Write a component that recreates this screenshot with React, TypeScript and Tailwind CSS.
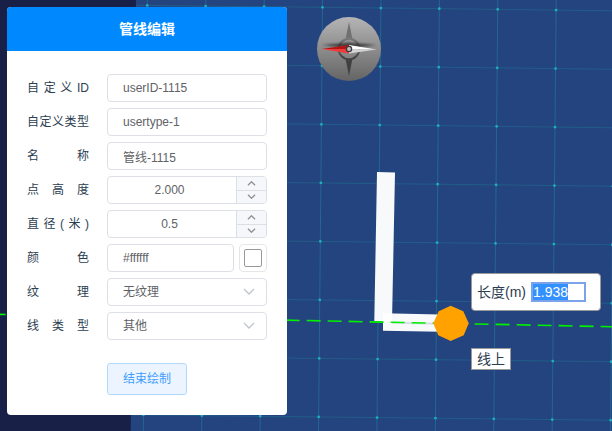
import { useEffect, useRef, useState } from "react"
import type { ReactNode } from "react"

const CELLS = Array.from({ length: 24 }, (_, i) => i)

const fieldCls =
  "h-7 min-w-0 rounded border border-[#dcdfe6] bg-white px-[15px] text-xs text-[#606266] outline-none focus:border-[#409eff]"

function Scene() {
  return (
    <svg className="absolute inset-0 h-full w-full" aria-hidden="true">
      <polygon points="136,-2 4000,-2 4000,4000 87,4000" fill="#24447f" />
      {/* ground grid, slightly rotated */}
      <g transform="matrix(0.9983 0.0113 -0.0094 1 147.3 5.4)">
        {CELLS.map((i) => (
          <g key={i} stroke="#1f8a9f" strokeOpacity="0.5">
            <line x1={i * 58.5} y1="-60" x2={i * 58.5} y2="1400" />
            <line x1="-11" y1={i * 58.5} x2="1400" y2={i * 58.5} strokeOpacity="0.35" />
          </g>
        ))}
        {CELLS.map((row) =>
          CELLS.map((col) => (
            <circle key={`${row}-${col}`} cx={col * 58.5} cy={row * 58.5} r="1.4" fill="#1eafbd" />
          ))
        )}
      </g>

      {/* pipe */}
      <polygon points="377,172 395,172.4 392,322 374.3,321" fill="#f7f9fb" />
      <polygon points="383,313.3 440,314.4 440,331.8 383,330.8" fill="#f7f9fb" />
      <polygon points="383,313.3 392,313.5 392,322 383,321.5" fill="#ffffff" />
      <line x1="392" y1="322.8" x2="440" y2="323.8" stroke="#dcddeb" strokeWidth="2" />
      <line
        x1="-8.3"
        y1="314.2"
        x2="2000"
        y2="354.8"
        stroke="#00f000"
        strokeWidth="1.6"
        strokeDasharray="14 7"
      />
      <polygon
        points="450.7,305.7 463.3,311.3 468.7,323.3 463.7,335.3 450.7,341 438.3,335.3 433.3,323.3 438.7,311.3"
        fill="#ffa200"
      />
    </svg>
  )
}

function Compass() {
  return (
    <svg viewBox="0 0 64 64" className="absolute left-[317px] top-[17px] h-16 w-16" role="img" aria-label="Compass">
      <defs>
        <linearGradient id="dial" x1="0" y1="0" x2="0" y2="1">
          <stop offset="0" stopColor="#b5b5b5" />
          <stop offset="1" stopColor="#646464" />
        </linearGradient>
        <linearGradient id="star" x1="0" y1="0" x2="0" y2="1">
          <stop offset="0" stopColor="#777777" />
          <stop offset="1" stopColor="#404040" />
        </linearGradient>
        <filter id="shade" x="-20%" y="-100%" width="140%" height="300%">
          <feGaussianBlur stdDeviation="1" />
        </filter>
      </defs>
      <circle cx="32" cy="32" r="32" fill="url(#dial)" />
      <circle cx="32" cy="32" r="10.3" fill="none" stroke="url(#star)" strokeWidth="2" />
      <path d="M32 5 L35.3 21.5 Q32 20 28.7 21.5 Z" fill="#707070" />
      <path d="M32 59 L35.3 42.5 Q32 44 28.7 42.5 Z" fill="#404040" />
      <path d="M5 28 L32 25.5 L59 28 L32 31.5 Z" fill="#222222" opacity="0.7" filter="url(#shade)" />
      <path d="M4.5 32 L32 28 V32 Z" fill="#b91414" />
      <path d="M4.5 32 L32 36.5 V32 Z" fill="#ee3b3b" />
      <path d="M59.5 32.5 L32 28 V32.5 Z" fill="#ffffff" />
      <path d="M59.5 32.5 L32 36.5 V32.5 Z" fill="#d4d4d4" />
      <circle cx="32" cy="32" r="2.6" fill="#bcbcbc" stroke="#3c3c3c" strokeWidth="1.3" />
    </svg>
  )
}

function Row({ id, label, children }: { id: string; label: string; children: ReactNode }) {
  return (
    <div className="flex items-center gap-[18px]">
      <label
        htmlFor={id}
        className="w-[62px] shrink-0 whitespace-nowrap text-justify text-xs text-[#2c3e50] [text-align-last:justify]"
      >
        {label}
      </label>
      <div className="flex min-w-0 flex-1 gap-[5px]">{children}</div>
    </div>
  )
}

function Chevron({ up = false, className }: { up?: boolean; className: string }) {
  return (
    <svg viewBox="0 0 12 7" className={className} fill="none" stroke="currentColor" strokeWidth="1.3" aria-hidden="true">
      <path d={up ? "M1 6 L6 1 L11 6" : "M1 1 L6 6 L11 1"} vectorEffect="non-scaling-stroke" />
    </svg>
  )
}

function NumberField({ id, initial, digits }: { id: string; initial: number; digits: number }) {
  const [value, setValue] = useState(initial.toFixed(digits))
  const step = 1 / 10 ** digits
  const change = (delta: number) => setValue((Number(value) + delta).toFixed(digits))

  return (
    <div className="flex h-7 min-w-0 flex-1 overflow-hidden rounded border border-[#dcdfe6] bg-white">
      <input
        id={id}
        value={value}
        onChange={(e) => setValue(e.target.value)}
        className="min-w-0 flex-1 pl-[15px] pr-5 text-center text-xs text-[#606266] outline-none"
      />
      <div className="flex w-[30px] flex-col divide-y divide-[#dcdfe6] border-l border-[#dcdfe6] bg-[#f5f7fa] text-[#909399]">
        <button type="button" aria-label="+" onClick={() => change(step)} className="flex flex-1 items-center justify-center">
          <Chevron up className="h-[5px] w-[9px]" />
        </button>
        <button type="button" aria-label="-" onClick={() => change(-step)} className="flex flex-1 items-center justify-center">
          <Chevron className="h-[5px] w-[9px]" />
        </button>
      </div>
    </div>
  )
}

function SelectField({ id, options }: { id: string; options: string[] }) {
  return (
    <div className="relative flex min-w-0 flex-1">
      <select id={id} className={`${fieldCls} w-full appearance-none`}>
        {options.map((option) => (
          <option key={option}>{option}</option>
        ))}
      </select>
      <Chevron className="pointer-events-none absolute right-3 top-[10px] h-[7px] w-3 text-[#c0c4cc]" />
    </div>
  )
}

function PipeForm() {
  const [color, setColor] = useState("#ffffff")

  return (
    <form className="relative w-[280px] overflow-hidden rounded bg-white" onSubmit={(e) => e.preventDefault()}>
      <h2 className="bg-[#0089ff] text-center text-sm font-bold leading-[44px] text-white">管线编辑</h2>
      <div className="flex flex-col gap-[6px] px-5 pb-5 pt-[23px]">
        <Row id="user-id" label="自定义ID">
          <input id="user-id" defaultValue="userID-1115" className={`${fieldCls} flex-1`} />
        </Row>
        <Row id="user-type" label="自定义类型">
          <input id="user-type" defaultValue="usertype-1" className={`${fieldCls} flex-1`} />
        </Row>
        <Row id="name" label="名称">
          <input id="name" defaultValue="管线-1115" className={`${fieldCls} flex-1`} />
        </Row>
        <Row id="height" label="点高度">
          <NumberField id="height" initial={2} digits={3} />
        </Row>
        <Row id="diameter" label="直径(米)">
          <NumberField id="diameter" initial={0.5} digits={1} />
        </Row>
        <Row id="color" label="颜色">
          <input
            id="color"
            value={color}
            onChange={(e) => setColor(e.target.value)}
            className={`${fieldCls} flex-1`}
          />
          <button
            type="button"
            aria-label="颜色"
            className="h-7 w-7 shrink-0 rounded border border-[#e6e6e6] bg-white p-1"
          >
            <span className="block h-full rounded-xs border border-[#999999]" style={{ backgroundColor: color }} />
          </button>
        </Row>
        <Row id="texture" label="纹理">
          <SelectField id="texture" options={["无纹理"]} />
        </Row>
        <Row id="line-type" label="线类型">
          <SelectField id="line-type" options={["其他"]} />
        </Row>
        <button
          type="submit"
          className="ml-20 mt-[17px] h-8 w-20 rounded-[3px] border border-[#b3d8ff] bg-[#ecf5ff] text-xs text-[#409eff]"
        >
          结束绘制
        </button>
      </div>
    </form>
  )
}

function LengthPopup() {
  const inputRef = useRef<HTMLInputElement>(null)

  useEffect(() => {
    inputRef.current?.focus()
    inputRef.current?.select()
  }, [])

  return (
    <div className="absolute left-[471px] top-[273px] flex h-[38px] w-[130px] items-center gap-[5px] rounded border border-[#999999] bg-white px-[5px] text-sm text-[#2c3e50]">
      <label htmlFor="length" className="shrink-0 whitespace-nowrap">长度(m)</label>
      <input
        id="length"
        ref={inputRef}
        defaultValue="1.938"
        className="h-5 w-[55px] border-2 border-[#7ba3ea] bg-white leading-4 outline-none selection:bg-[#3390ff] selection:text-white"
      />
    </div>
  )
}

export default function App() {
  return (
    <main className="relative min-h-screen overflow-hidden bg-[#192047] p-[7px] font-['Liberation_Sans','Noto_Sans_CJK_SC',sans-serif]">
      <Scene />
      <PipeForm />
      <Compass />
      <LengthPopup />
      <div className="absolute left-[471px] top-[348px] border border-[#999999] bg-white px-[5px] text-sm leading-5 text-[#2c3e50]">
        线上
      </div>
    </main>
  )
}
